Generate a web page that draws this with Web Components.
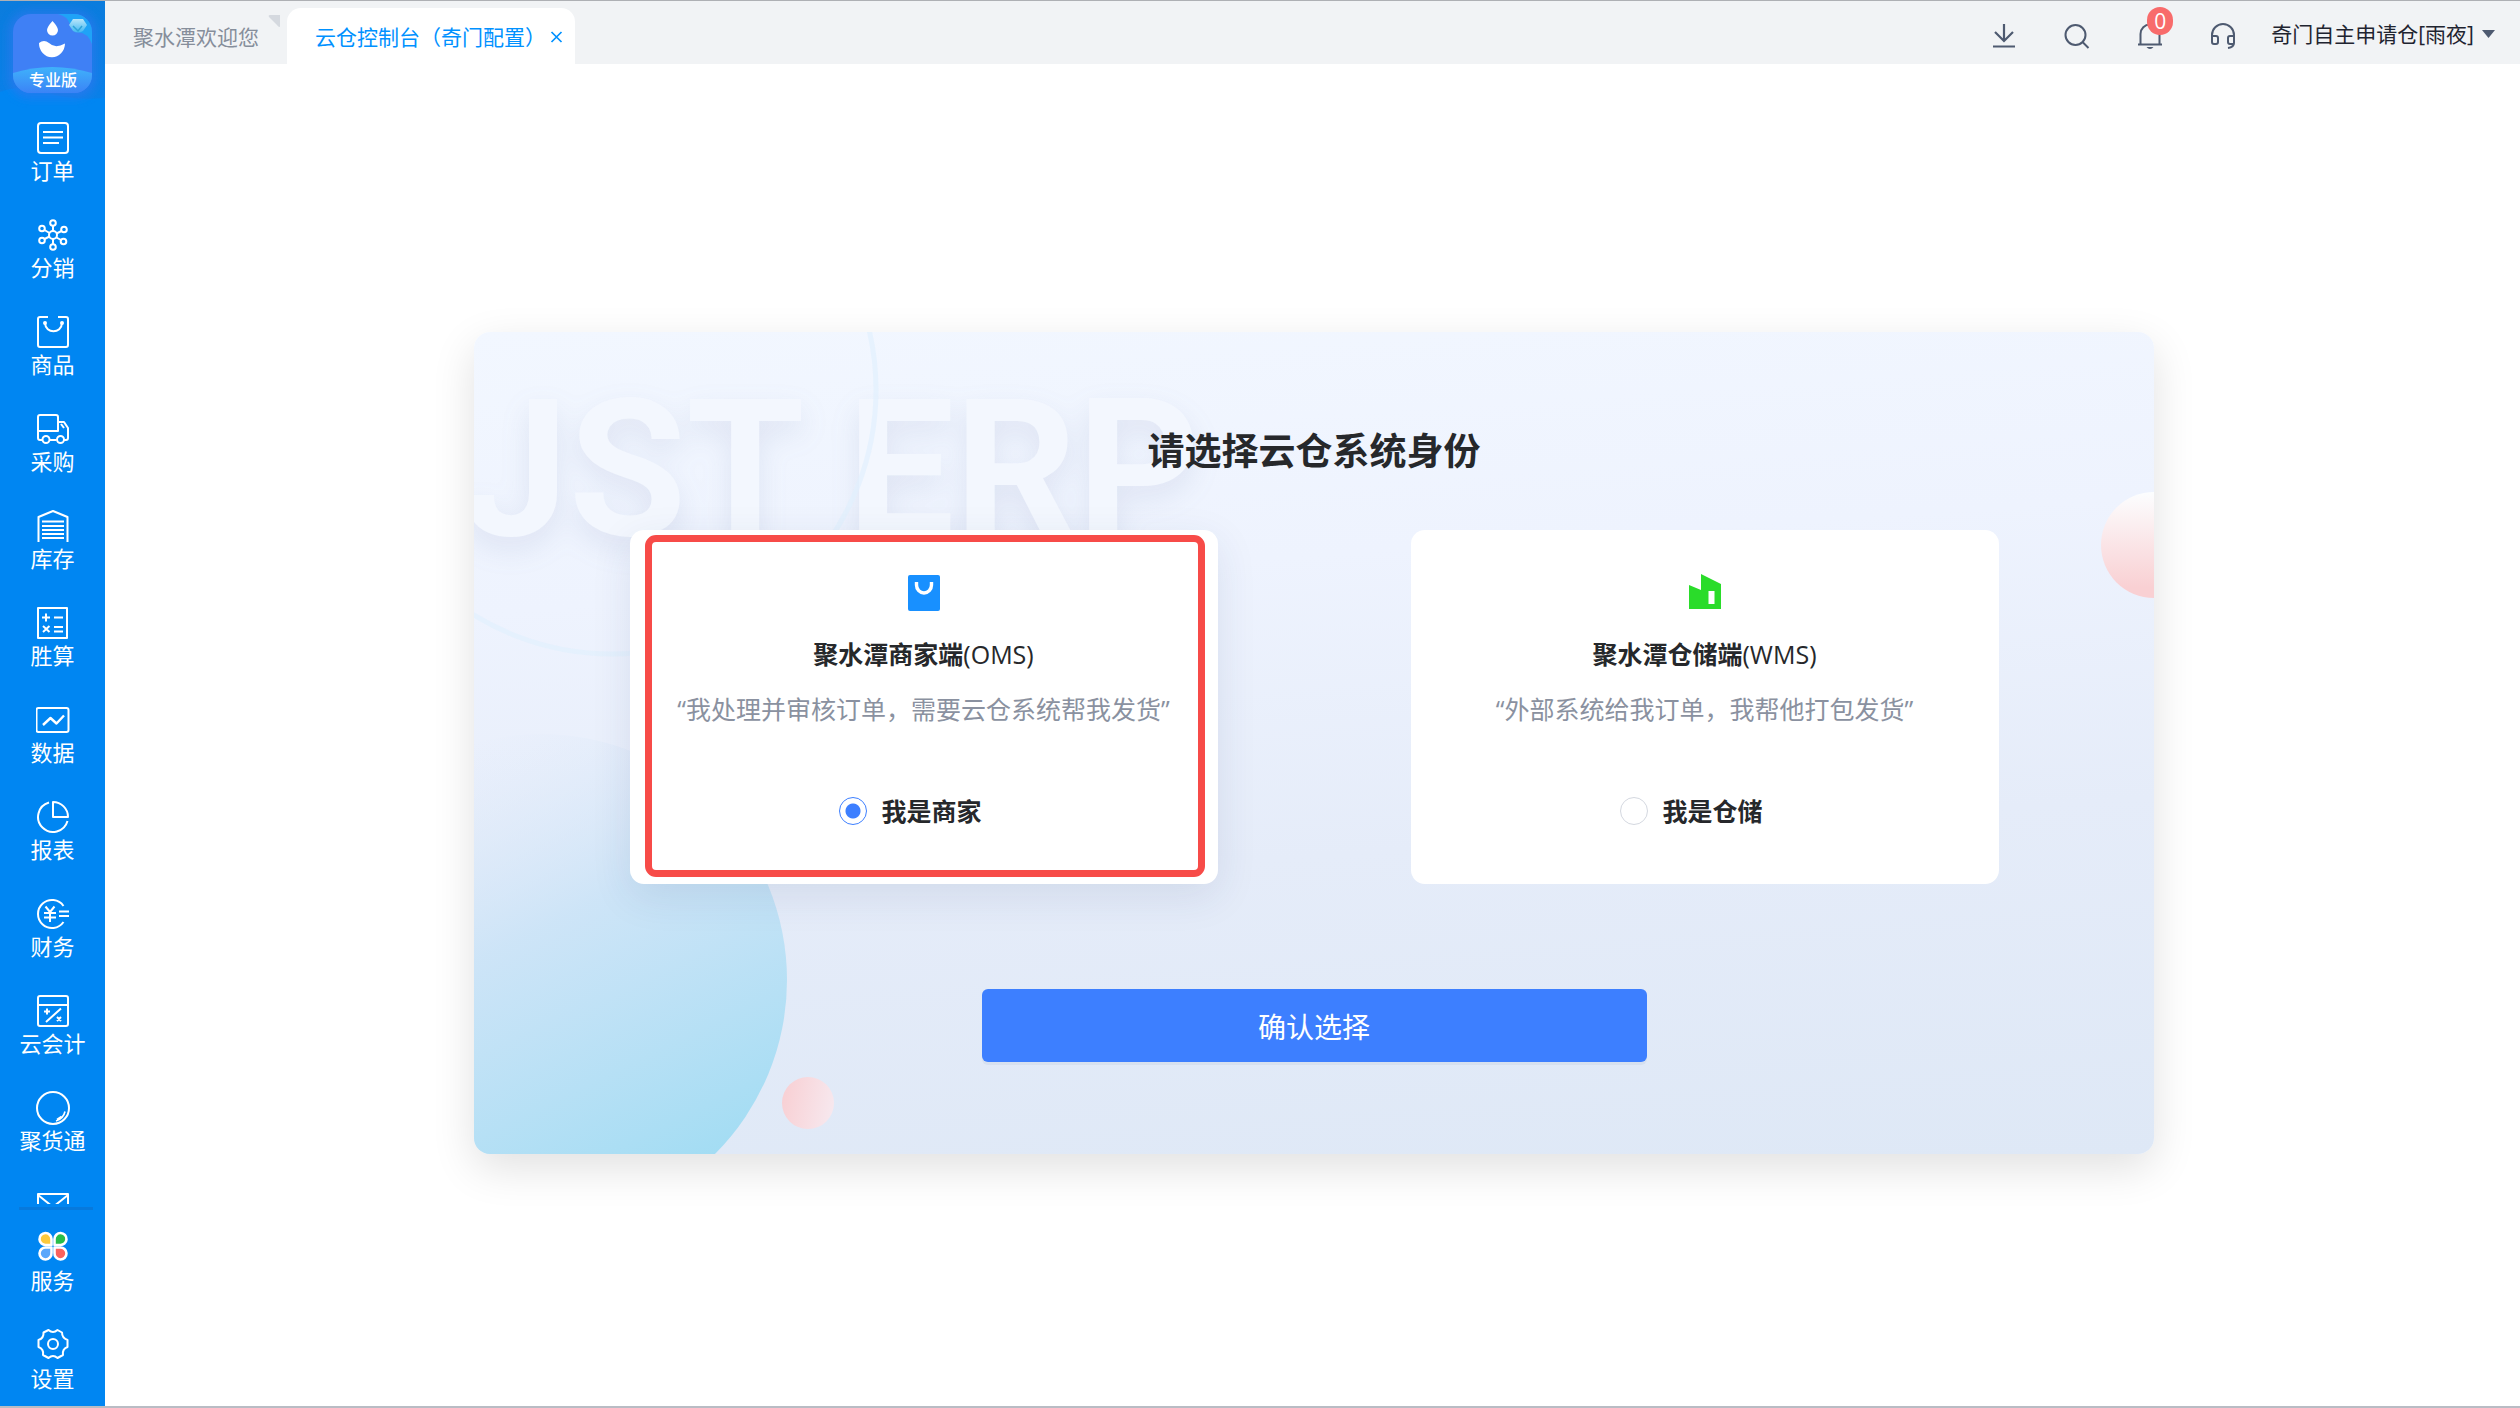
<!DOCTYPE html>
<html lang="zh-CN">
<head>
<meta charset="utf-8">
<meta name="viewport" content="width=device-width, initial-scale=1">
<title>云仓控制台（奇门配置）</title>
<style>
  html, body { margin: 0; height: 100%; }
  body {
    font-family: "Open Sans", "Noto Sans CJK SC", sans-serif;
    color: #26282b;
    background: #fff;
  }
</style>
</head>
<body>
<erp-shell>
  <side-nav slot="nav"></side-nav>
  <top-bar slot="top"></top-bar>
  <identity-panel></identity-panel>
</erp-shell>

<template id="tpl-shell">
  <style>
    :host {
      display: grid;
      grid-template-columns: 105px minmax(0, 1fr);
      height: 100vh;
      box-sizing: border-box;
      border-top: 1px solid #aeb0b4;
      border-bottom: 2px solid #b9bcc4;
    }
    .body { display: flex; flex-direction: column; min-width: 0; }
    main {
      flex: 1;
      display: flex;
      align-items: center;
      justify-content: center;
      padding: 16px 24px 0 27px;
    }
  </style>
  <slot name="nav"></slot>
  <div class="body">
    <slot name="top"></slot>
    <main><slot></slot></main>
  </div>
</template>

<template id="tpl-nav">
  <style>
    :host {
      display: flex;
      flex-direction: column;
      min-height: 0;
      background: #0086f2;
    }
    .brand { height: 90px; flex: none; display: block; }
    .brand svg { display: block; overflow: visible; }
    .list { flex: 1; min-height: 0; overflow: hidden; }
    .foot { margin-top: 3px; }
    .foot::before {
      content: "";
      display: block;
      height: 3px;
      margin: 0 12px 0 19px;
      background: #0779dc;
    }
    .foot nav-item { --item-height: 98px; --icon-top: 19px; --label-gap: 4px; }
  </style>
  <a class="brand" href="#home" aria-label="专业版">
    <svg width="105" height="110" viewBox="0 1 105 110">
      <defs>
        <linearGradient id="bg" x1="0" y1="0" x2="0" y2="1"><stop offset="0" stop-color="#0b7cdd"/><stop offset="1" stop-color="#0a80e8"/></linearGradient>
        <linearGradient id="rib" x1="0" y1="0" x2="0" y2="1"><stop offset="0" stop-color="#3fb2fb"/><stop offset="1" stop-color="#3b83f6"/></linearGradient>
        <linearGradient id="gem" x1="0" y1="0" x2="0" y2="1"><stop offset="0" stop-color="#b8e6fa"/><stop offset="1" stop-color="#3fb6f2"/></linearGradient>
        <filter id="glow" x="-30%" y="-30%" width="160%" height="160%"><feGaussianBlur stdDeviation="5"/></filter>
        <clipPath id="lc"><rect x="13" y="14" width="79" height="79" rx="18"/></clipPath>
      </defs>
      <path d="M0 1H105V98Q70 101 45 92Q20 84 0 92Z" fill="url(#bg)"/>
      <rect x="9" y="11" width="87" height="87" rx="20" fill="#2f78ee" opacity=".7" filter="url(#glow)"/>
      <g clip-path="url(#lc)">
        <rect x="13" y="14" width="79" height="79" fill="#3f80f5"/>
        <path d="M58 14H92V44Q88 33 78 32Q71 31 70 24Q67 16 58 14Z" fill="#1fa3f7"/>
        <path d="M13 73Q52 61 92 73V93H13Z" fill="url(#rib)"/>
      </g>
      <path d="M73 19H83L87 25L83 31Q78 34 73 31L69 25Z" fill="url(#gem)"/>
      <path d="M73 26L78 31L82 26" fill="none" stroke="#2da4d8" stroke-width="1.5"/>
      <path d="M52.500 21Q58 27 58 30A5.500 5.500 0 0 1 47 30Q47 27 52.500 21Z" fill="#fff"/>
      <path d="M39 43Q44 39 49 43Q55 49 65 43.500A13 14 0 0 1 39 43Z" fill="#fff"/>
      <text x="53" y="86" text-anchor="middle" font-size="16" font-weight="500" fill="#fff">专业版</text>
    </svg>
  </a>
  <nav class="list" aria-label="主菜单">
    <nav-item icon="order">订单</nav-item>
    <nav-item icon="share">分销</nav-item>
    <nav-item icon="goods">商品</nav-item>
    <nav-item icon="truck">采购</nav-item>
    <nav-item icon="stock">库存</nav-item>
    <nav-item icon="calc">胜算</nav-item>
    <nav-item icon="data">数据</nav-item>
    <nav-item icon="report">报表</nav-item>
    <nav-item icon="money">财务</nav-item>
    <nav-item icon="account">云会计</nav-item>
    <nav-item icon="circle">聚货通</nav-item>
    <nav-item icon="mail"></nav-item>
  </nav>
  <nav class="foot" aria-label="工具">
    <nav-item icon="service">服务</nav-item>
    <nav-item icon="gear">设置</nav-item>
  </nav>
</template>

<template id="tpl-item">
  <style>
    :host { display: block; height: var(--item-height, 97px); }
    a {
      display: flex;
      flex-direction: column;
      align-items: center;
      gap: var(--label-gap, 2px);
      padding-top: var(--icon-top, 30px);
      color: #fff;
      text-decoration: none;
      font-size: 22px;
      line-height: 26px;
    }
    svg { display: block; fill: none; stroke: #fff; stroke-width: 2; stroke-linejoin: round; }
  </style>
  <a href="#"><svg width="34" height="34" viewBox="-1 -1 34 34" aria-hidden="true"></svg><span><slot></slot></span></a>
</template>

<template id="tpl-top">
  <style>
    :host {
      display: flex;
      justify-content: space-between;
      flex: none;
      height: 63px;
      background: #f1f3f5;
    }
    .tabs { display: flex; align-items: flex-end; }
    .tab {
      position: relative;
      display: flex;
      align-items: center;
      gap: 4px;
      height: 56px;
      box-sizing: border-box;
      padding: 2px 28px 0;
      font-size: 21px;
      line-height: 30px;
      color: #868e9b;
    }
    .tab a { color: inherit; text-decoration: none; white-space: nowrap; }
    .tab.on { background: #fff; color: #0091ff; border-radius: 14px 14px 0 0; padding-right: 12px; }
    .fold { position: absolute; right: 7px; top: 7px; }
    button { border: 0; padding: 0; background: none; font: inherit; color: inherit; cursor: pointer; }
    svg { display: block; fill: none; stroke: #4e5a70; stroke-width: 2; }
    .tab button svg { stroke: #0091ff; }
    .tools { display: flex; align-items: center; gap: 41px; padding-right: 25px; }
    .tool { position: relative; width: 32px; height: 32px; display: grid; place-items: center; margin-top: 6px; }
    .badge {
      position: absolute; left: 13px; top: -13px;
      width: 26px; height: 28px; border-radius: 13px;
      background: #f86b6b; color: #fff;
      font-size: 21px; line-height: 28px; text-align: center;
    }
    .account { display: flex; align-items: center; gap: 8px; margin-left: -9px; margin-top: 2px; font-size: 21px; line-height: 30px; color: #1f2430; white-space: nowrap; }
    .account svg { fill: #4e5a70; stroke: none; }
  </style>
  <div class="tabs">
    <div class="tab"><a href="#welcome">聚水潭欢迎您</a>
      <svg class="fold" width="12" height="12" viewBox="0 0 12 12" style="fill:#d5d9df;stroke:none"><path d="M2 0H12V12Q10 12 9 10L1 2Q0 0 2 0Z"/></svg>
    </div>
    <div class="tab on"><a href="#console">云仓控制台（奇门配置）</a>
      <button aria-label="关闭"><svg width="13" height="12" viewBox="0 0 13 12"><path d="M1.500 1L11.500 11M11.500 1L1.500 11" stroke-width="1.700"/></svg></button>
    </div>
  </div>
  <div class="tools">
    <button class="tool" aria-label="下载"><svg width="24" height="26" viewBox="0 0 24 26"><path d="M12 1V18M3 9L12 18L21 9M1 23.500H23" stroke-width="2.200"/></svg></button>
    <button class="tool" aria-label="搜索"><svg width="26" height="26" viewBox="0 0 26 26"><circle cx="11.500" cy="12" r="10"/><path d="M18.500 19L24.500 25"/></svg></button>
    <button class="tool" aria-label="消息"><svg width="26" height="26" viewBox="0 0 26 26"><path d="M1 21.500H25M3.500 21V11A9.500 9.500 0 0 1 22.500 11V21"/><path d="M9.500 24H16.500Q15 26 13 26T9.500 24Z" fill="#4e5a70" stroke="none"/></svg><span class="badge">0</span></button>
    <button class="tool" aria-label="客服"><svg width="26" height="26" viewBox="0 0 26 26"><path d="M2 17V12A11 11 0 0 1 24 12V20Q24 24 18 25"/><path d="M2 13H6Q8 13 8 15V19Q8 21 6 21H4Q2 21 2 19ZM24 13H20Q18 13 18 15V19Q18 21 20 21H24"/></svg></button>
    <button class="account">奇门自主申请仓[雨夜]<svg width="13" height="8" viewBox="0 0 13 8"><path d="M0 0H13L6.500 8Z"/></svg></button>
  </div>
</template>

<template id="tpl-card">
  <style>
    :host {
      display: flex;
      flex-direction: column;
      align-items: center;
      flex: 0 1 588px;
      box-sizing: border-box;
      padding: 43px 16px 55px;
      position: relative;
      background: #fff;
      border-radius: 14px;
      font-size: 25px;
      line-height: 36px;
      white-space: nowrap;
    }
    :host([selected]) { box-shadow: 0 12px 40px rgba(40, 60, 110, .1); }
    :host([selected])::after {
      content: "";
      position: absolute;
      inset: 5px 13px 7px 15px;
      border: 7px solid #f74b48;
      border-radius: 11px;
      pointer-events: none;
    }
    .icon { height: 40px; }
    h2 { margin: 23px 0 19px; font-size: inherit; font-weight: 700; }
    p { margin: 0 0 66px; color: #8a91a0; }
  </style>
  <div class="icon"><slot name="icon"></slot></div>
  <h2><slot name="title"></slot></h2>
  <p><slot name="text"></slot></p>
  <slot name="choice"></slot>
</template>

<template id="tpl-panel">
  <style>
    :host {
      display: block;
      position: relative;
      width: 100%;
      max-width: 1680px;
      border-radius: 16px;
      background: linear-gradient(176deg, #f2f7ff 0%, #eef3fe 30%, #e5ecf9 62%, #dee8f6 100%);
      box-shadow: 0 14px 44px rgba(0, 0, 0, .12);
    }
    .art { position: absolute; inset: 0; width: 100%; height: 100%; border-radius: 16px; }
    .art text { font: 700 191px Roboto, sans-serif; fill: #f3f7fe; filter: drop-shadow(0 12px 14px rgba(90, 105, 160, .12)); }
    form { position: relative; display: flex; flex-direction: column; align-items: center; padding: 92px 24px; }
    h1 { margin: 0 0 52px; font-size: 37px; line-height: 54px; font-weight: 700; }
    .cards { display: flex; justify-content: center; gap: 193px; width: 100%; }
    svg { display: block; }
    .thin { font-weight: 400; }
    label { display: flex; align-items: center; gap: 14px; margin-right: 26px; font-weight: 700; cursor: pointer; }
    input {
      appearance: none;
      margin: 0;
      width: 28px; height: 28px;
      border: 1px solid #d4d8e0;
      border-radius: 50%;
      background: #fff;
    }
    input:checked { border-color: #3d7fff; background: radial-gradient(circle, #3d7fff 7px, #fff 8px); }
    .ok {
      margin-top: 105px;
      width: 100%; max-width: 665px; height: 73px;
      border: 0; border-radius: 6px;
      background: #3d7fff; color: #fff;
      font: inherit; font-size: 28px;
      box-shadow: 0 3px 0 rgba(40, 50, 90, .05);
      cursor: pointer;
    }
  </style>
  <svg class="art" aria-hidden="true">
    <defs>
      <linearGradient id="sea" x1=".3" y1=".04" x2=".75" y2=".95">
        <stop offset="0" stop-color="#dfe9f9" stop-opacity="0"/>
        <stop offset=".4" stop-color="#c9e3f7" stop-opacity=".85"/>
        <stop offset="1" stop-color="#a0dcf3"/>
      </linearGradient>
      <linearGradient id="pinkA" x1="0" y1=".4" x2="1" y2=".6"><stop offset="0" stop-color="#f8d0d4"/><stop offset="1" stop-color="#f7e8ee"/></linearGradient>
      <linearGradient id="pinkB" x1="0" y1="0" x2="0" y2="1"><stop offset="0" stop-color="#fcfeff"/><stop offset=".9" stop-color="#f9d0d3"/></linearGradient>
    </defs>
    <text x="-12" y="203">JST ERP</text>
    <circle cx="138" cy="58" r="264" fill="none" stroke="#e0f0fe" stroke-width="5" opacity=".65"/>
    <circle cx="67" cy="648" r="246" fill="url(#sea)"/>
    <circle cx="334" cy="771" r="26" fill="url(#pinkA)"/>
    <circle cx="100%" cy="213" r="53" fill="url(#pinkB)"/>
  </svg>
  <form>
    <h1>请选择云仓系统身份</h1>
    <div class="cards">
      <choice-card selected>
        <svg slot="icon" width="40" height="40" viewBox="0 0 40 40"><rect x="4" y="2" width="32" height="36" rx="2" fill="#1890ff"/><path d="M12.500 9V12A7.500 8 0 0 0 27.500 12V9" fill="none" stroke="#fff" stroke-width="3.400"/></svg>
        <span slot="title">聚水潭商家端<span class="thin">(OMS)</span></span>
        <span slot="text">“我处理并审核订单，需要云仓系统帮我发货”</span>
        <label slot="choice"><input type="radio" name="identity" value="oms" checked>我是商家</label>
      </choice-card>
      <choice-card>
        <svg slot="icon" width="40" height="40" viewBox="0 0 40 40"><path d="M4 12L16 17V1L36 11V36H4Z" fill="#2adc2a"/><rect x="23.500" y="18" width="6" height="13" fill="#fff"/></svg>
        <span slot="title">聚水潭仓储端<span class="thin">(WMS)</span></span>
        <span slot="text">“外部系统给我订单，我帮他打包发货”</span>
        <label slot="choice"><input type="radio" name="identity" value="wms">我是仓储</label>
      </choice-card>
    </div>
    <button class="ok" type="button">确认选择</button>
  </form>
</template>

<script>
  const ICONS = {
    order: '<rect x="1" y="1" width="30" height="30" rx="3"/><path d="M6 10H26M6 15.500H26M6 21H22"/>',
    share: '<circle cx="16" cy="16" r="4"/><circle cx="16" cy="4" r="2.800"/><circle cx="16" cy="28" r="2.800"/><circle cx="5" cy="9.500" r="2.800"/><circle cx="27" cy="10.500" r="2.800"/><circle cx="5" cy="21.500" r="2.800"/><circle cx="26.500" cy="22.500" r="2.800"/><path d="M16 7V12M16 20V25M7.500 11L12.500 14M24.500 12L19.500 14.500M7.500 20L12.500 17.500M24 21L19.500 18.500"/>',
    goods: '<path d="M11 1H3Q1 1 1 3V29Q1 31 3 31H29Q31 31 31 29V3Q31 1 29 1H21"/><path d="M8 7C8.500 18 24.500 18 25 7"/><circle cx="8" cy="7" r="1" fill="#fff"/><circle cx="25" cy="7" r="1" fill="#fff"/>',
    truck: '<path d="M5 27H3Q1 27 1 25V4Q1 2 3 2H19Q21 2 21 4V18H1M12.500 27H19.500M27 27H29Q31 27 31 25V15L27 9H21"/><path d="M24 11L27 15"/><circle cx="9" cy="26.500" r="3.500"/><circle cx="23.500" cy="26.500" r="3.500"/>',
    stock: '<path d="M1.500 32V7L16 1L30.500 7V32"/><path d="M5 11.500H27M5 16H27M5 20H27M5 24H27M5 28H27"/>',
    calc: '<path d="M1 1H30V31H1Z"/><path d="M5 10.500H13M9 6.500V14.500M17 10.500H26M6 19L12.500 25M12.500 19L6 25M17 20H26M17 24.500H26"/>',
    data: '<rect x="-.500" y="4" width="32" height="24" rx="2"/><path d="M6 21L13.500 14L19.500 19.500L27 11.500" stroke-width="2.400"/>',
    report: '<path d="M12 1.500A15 15 0 1 0 30.500 20"/><path d="M16 1V16H31A15 15 0 0 0 16 1Z"/>',
    money: '<path d="M26.500 8A14 14 0 1 0 26.500 24"/><path d="M8.500 8.500L13 14L17.500 8.500M13 14V24M7 15H19M7 19.500H19M22 13.500H32M22 18H32"/>',
    account: '<rect x="1" y="1" width="30" height="30" rx="2"/><path d="M1 10H31M7 16.500H13M10 13.500V19.500M9 27L24 13.500M20 22L24 26M24 22L20 26"/>',
    circle: '<circle cx="16" cy="16" r="16"/><path d="M28 19.500Q26.500 26.500 19 29M24.500 24.500L20 27.500" stroke-width="1.600"/>',
    mail: '<path d="M1 5H31V27H1Z"/><path d="M1 6L16 18L31 6"/>',
    service: '<g stroke-width="2.600"><path d="M14.500 15V9A6 6 0 1 0 9 15Z" fill="#fbc93d"/><path d="M17.500 15V9A6 6 0 1 1 23 15Z" fill="#28bd4a"/><path d="M14.500 17.500V23A6 6 0 1 1 9 17.500Z" fill="#5aa7fb"/><path d="M17.500 17.500V23A6 6 0 1 0 23 17.500Z" fill="#f9635f"/></g>',
    gear: '<path d="M11.500 2Q16 6 20.500 2L25 4.500Q25 10 30.500 12V19Q25 21 26 27L20.500 30Q16 26 11.500 30L6 27Q7 21 1.500 19V12Q7 10 6.500 4.500Z"/><circle cx="16" cy="16" r="5"/>'
  };

  class TemplateElement extends HTMLElement {
    constructor() {
      super();
      this.attachShadow({ mode: 'open' })
        .append(document.getElementById(this.constructor.template).content.cloneNode(true));
    }
  }

  customElements.define('nav-item', class extends TemplateElement {
    static template = 'tpl-item';
    connectedCallback() {
      const icon = this.getAttribute('icon');
      this.shadowRoot.querySelector('svg').innerHTML = ICONS[icon];
      this.shadowRoot.querySelector('a').href = '#' + icon;
    }
  });
  customElements.define('side-nav', class extends TemplateElement { static template = 'tpl-nav'; });
  customElements.define('top-bar', class extends TemplateElement { static template = 'tpl-top'; });
  customElements.define('choice-card', class extends TemplateElement { static template = 'tpl-card'; });
  customElements.define('identity-panel', class extends TemplateElement {
    static template = 'tpl-panel';
    connectedCallback() {
      this.shadowRoot.addEventListener('change', () => {
        for (const card of this.shadowRoot.querySelectorAll('choice-card')) {
          card.toggleAttribute('selected', card.querySelector('input').checked);
        }
      });
    }
  });
  customElements.define('erp-shell', class extends TemplateElement { static template = 'tpl-shell'; });
</script>
</body>
</html>
